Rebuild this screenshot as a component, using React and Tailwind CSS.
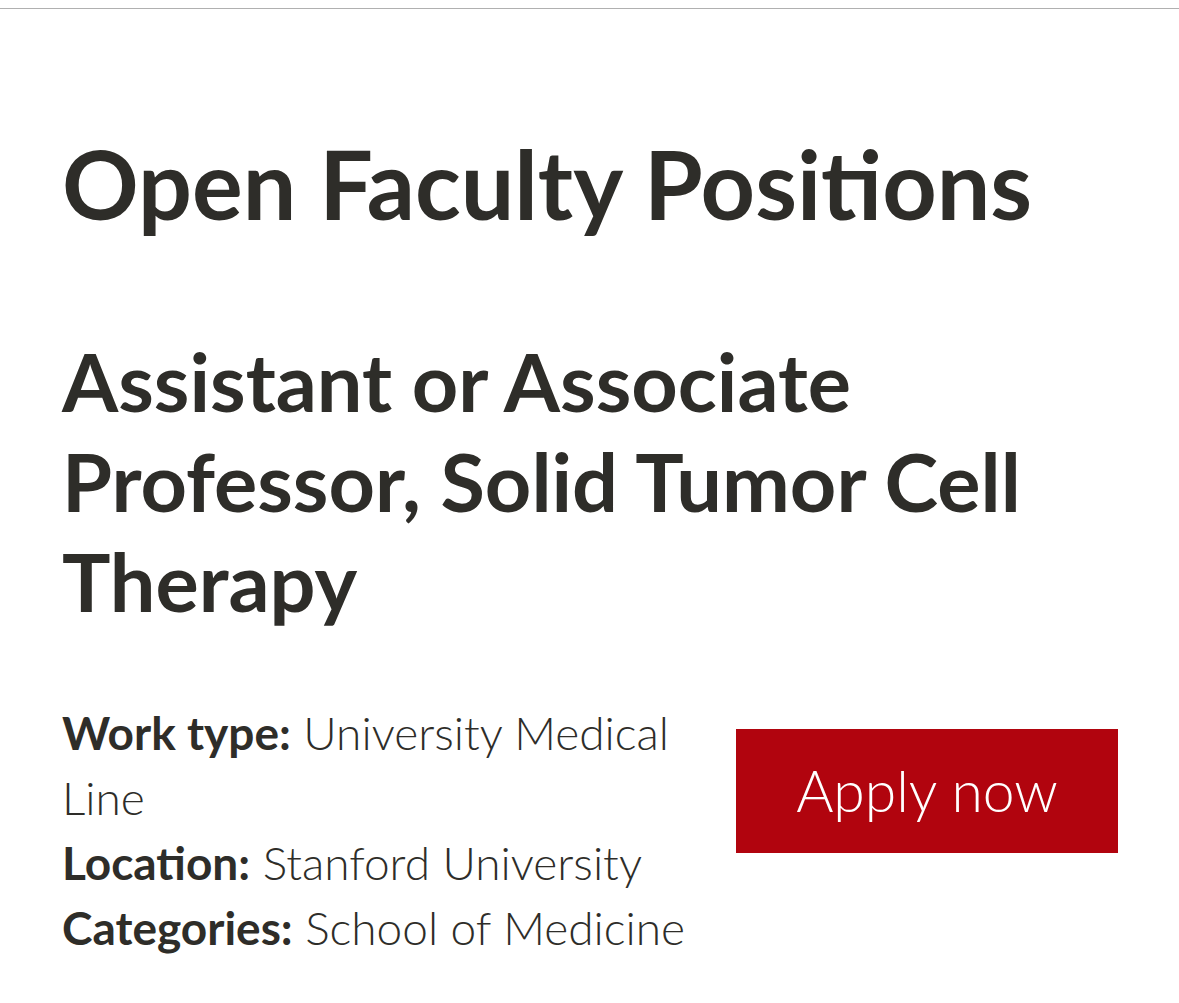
export default function App() {
  return (
    <div className="min-h-[1003px] bg-white pt-2 font-['Lato','Noto_Sans',sans-serif] text-[#2e2d29]">
      <div className="border-t border-[#b0b0b0]">
        <div className="pl-[62px] pr-[61px]">
          <h1 className="mt-[119px] text-[95px] font-bold leading-[110px]">Open Faculty Positions</h1>
          <h2 className="mt-[93px] text-[81px] font-bold leading-[100px]">
            Assistant or Associate Professor, Solid Tumor Cell Therapy
          </h2>
          <div className="mt-[69px] flex items-start justify-between">
            <div className="w-[640px] text-[46px] font-light leading-[65px]">
              <p>
                <span className="font-bold">Work type:</span> University Medical Line
              </p>
              <p>
                <span className="font-bold">Location:</span> Stanford University
              </p>
              <p>
                <span className="font-bold">Categories:</span> School of Medicine
              </p>
            </div>
            <a
              href="#"
              className="mt-[29px] flex h-[124px] w-[382px] items-center justify-center bg-[#b1040e] text-[57px] font-light text-white"
            >
              Apply now
            </a>
          </div>
        </div>
      </div>
    </div>
  );
}
